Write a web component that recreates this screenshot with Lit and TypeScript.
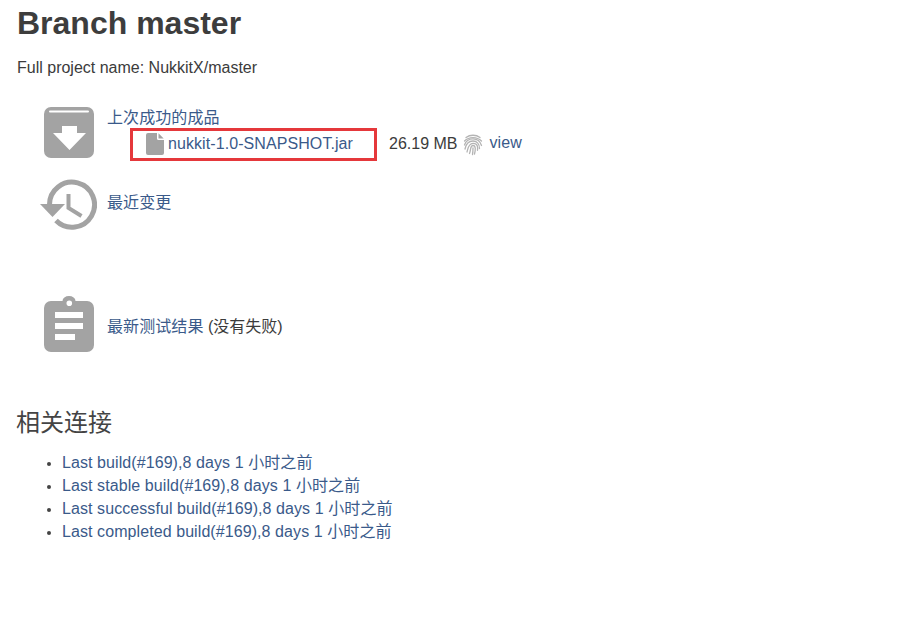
import { LitElement, html, css } from "lit";
import { customElement } from "lit/decorators.js";

const builds = [
  "Last build(#169),8 days 1 小时之前",
  "Last stable build(#169),8 days 1 小时之前",
  "Last successful build(#169),8 days 1 小时之前",
  "Last completed build(#169),8 days 1 小时之前",
];

@customElement("app-root")
export class AppRoot extends LitElement {
  static styles = css`
    :host {
      display: block;
      height: 622px;
      box-sizing: border-box;
      overflow: hidden;
      padding: 6px 17px 0;
      background: #fff;
      color: #3b3b3b;
      font: 16px/23px "Liberation Sans", "Noto Sans CJK SC", sans-serif;
    }
    a { color: #3a5a8a; text-decoration: none; letter-spacing: 0.08px; }
    h1 { margin: 0; font-size: 32px; line-height: 34px; font-weight: 700; color: #3d3d3d; }
    .full { margin: 16px 0 0; line-height: 23px; }
    .rows { display: flex; flex-direction: column; margin-top: 27px; padding-left: 22px; }
    .row { display: flex; align-items: flex-start; }
    .ic { width: 68px; flex: none; display: flex; }
    .ic svg { display: block; fill: #a3a3a3; margin-left: 5px; }
    .ic svg.clock { margin-left: 0; }
    .r1 { height: 72px; padding-top: 1px; }
    .r2 { height: 117px; }
    .r3 { height: 60px; }
    .label { line-height: 22px; }
    .r2 .label { margin-top: 13px; }
    .r3 .label { margin-top: 20px; }
    .r1body { display: flex; flex-direction: column; }
    .r1body .label { line-height: 18px; margin-top: 2px; }
    .file { display: flex; align-items: center; margin: 1px 0 0 23px; height: 33px; }
    .box {
      box-sizing: border-box;
      display: flex;
      align-items: center;
      gap: 4px;
      width: 247px;
      height: 33px;
      padding: 0 0 3px 13px;
      border: 3px solid #e5383b;
    }
    .box svg { fill: #a3a3a3; display: block; margin-top: 2px; }
    .size { margin: -3px 0 0 12px; }
    .fp { margin: 0 6px 0 6px; display: block; }
    .view { position: relative; top: -2px; }
    h2 { margin: 51px 0 0 -1px; font-size: 24px; line-height: 32px; font-weight: 400; color: #444; }
    ul { margin: 12px 0 0; padding: 0 0 0 45px; }
    li { line-height: 23px; }
    li::marker { font-size: 14px; color: #444; }
  `;

  render() {
    return html`
      <h1>Branch master</h1>
      <p class="full">Full project name: NukkitX/master</p>
      <div class="rows">
        <div class="row r1">
          <div class="ic">
            <svg width="50" height="51" viewBox="0 0 50 51">
              <path fill-rule="evenodd" d="M7 0h36a7 7 0 0 1 7 7v37a7 7 0 0 1-7 7H7a7 7 0 0 1-7-7V7a7 7 0 0 1 7-7zM6 3.500a1 1 0 0 0 0 2h38a1 1 0 0 0 0-2zM18 19v7H9l16.500 17L42 26h-9v-7z"/>
            </svg>
          </div>
          <div class="r1body">
            <a class="label" href="#">上次成功的成品</a>
            <div class="file">
              <div class="box">
                <svg width="18" height="22" viewBox="0 0 18 22">
                  <path d="M2 0h9v5.500a1.500 1.500 0 0 0 1.500 1.500H18v13a2 2 0 0 1-2 2H2a2 2 0 0 1-2-2V2a2 2 0 0 1 2-2zM12.500 0.300L17.700 5.500H12.500z"/>
                </svg>
                <a href="#">nukkit-1.0-SNAPSHOT.jar</a>
              </div>
              <span class="size">26.19 MB</span>
              <svg class="fp" width="20" height="23" viewBox="0 0 20 23" fill="none" stroke="#b4b4b4" stroke-width="1.300" stroke-linecap="round">
                <path d="M3 4.500C7 1.500 13 1.500 17 4.500"/>
                <path d="M1.500 8C6 3.500 14 3.500 18.500 8"/>
                <path d="M1.500 12C3 7 7 5.800 10 5.800S17 7.500 18.500 12.500"/>
                <path d="M2 16C3 11 6 8 10 8s6.500 3 6.500 7.500"/>
                <path d="M4 19C5 16 5 10.500 10 10.300s4.800 4.200 4.500 7"/>
                <path d="M6.500 20.500C8 17 7 12.500 10 12.500s2.500 4.500 1.500 8.500"/>
                <path d="M9.500 21.500C10 19 10 17 10 14.800"/>
              </svg>
              <a class="view" href="#">view</a>
            </div>
          </div>
        </div>
        <div class="row r2">
          <div class="ic">
            <svg class="clock" width="58" height="52" viewBox="0 0 58 52">
              <g fill="none" stroke="#a3a3a3">
                <path stroke-width="5" d="M10.500 26A22.500 22.500 0 1 1 17 41.500"/>
                <path stroke-width="4" d="M29.500 15v14l13 8"/>
              </g>
              <path d="M1 25h25L13.500 38z"/>
            </svg>
          </div>
          <a class="label" href="#">最近变更</a>
        </div>
        <div class="row r3">
          <div class="ic">
            <svg width="50" height="56" viewBox="0 0 50 56">
              <path fill-rule="evenodd" d="M18.500 5a6.500 5 0 0 1 13 0H43a7 7 0 0 1 7 7V49a7 7 0 0 1-7 7H7a7 7 0 0 1-7-7V12a7 7 0 0 1 7-7zM25.300 4.500a2.800 2.800 0 1 0 0 5.600 2.800 2.800 0 0 0 0-5.600zM11 16v6h28v-6zM11 27v6h28v-6zM11 38v6h20v-6z"/>
            </svg>
          </div>
          <div class="label"><a href="#">最新测试结果</a> (没有失败)</div>
        </div>
      </div>
      <h2>相关连接</h2>
      <ul>
        ${builds.map((b) => html`<li><a href="#">${b}</a></li>`)}
      </ul>
    `;
  }
}
